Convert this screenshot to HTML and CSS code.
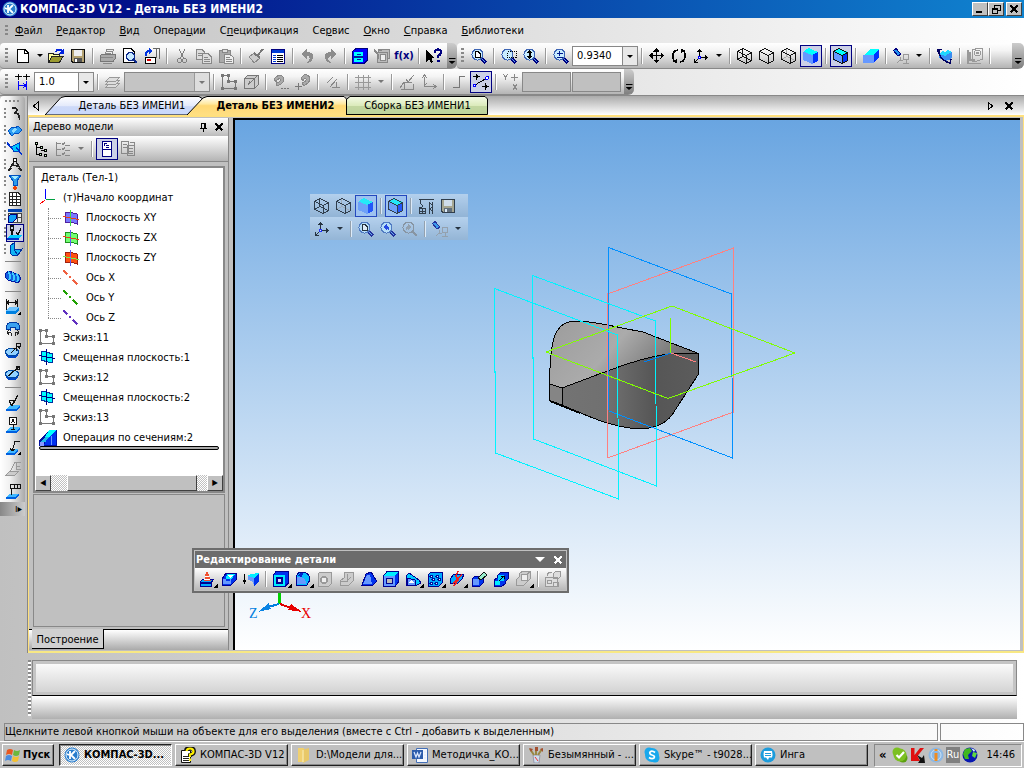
FILE: index.html
```html
<!DOCTYPE html>
<html lang="ru">
<head>
<meta charset="utf-8">
<title>КОМПАС-3D V12</title>
<link rel="stylesheet" href="styles.css">
</head>
<body>
<svg class="defs" aria-hidden="true">
<defs>
<linearGradient id="gUp" x1="0" y1="0" x2="1" y2="0.4"><stop offset="0" stop-color="#9c9c9c"/><stop offset=".5" stop-color="#ababab"/><stop offset="1" stop-color="#686868"/></linearGradient>
<linearGradient id="gLow" x1="0" y1="0" x2="1" y2="0"><stop offset="0" stop-color="#747474"/><stop offset=".4" stop-color="#707070"/><stop offset=".7" stop-color="#565656"/><stop offset="1" stop-color="#5c5c5c"/></linearGradient>
<linearGradient id="gTab1" x1="0" y1="0" x2="0" y2="1"><stop offset="0" stop-color="#fff"/><stop offset=".5" stop-color="#e4eafb"/><stop offset=".55" stop-color="#cdd9f8"/><stop offset="1" stop-color="#c8d8fc"/></linearGradient>
<linearGradient id="gTab2" x1="0" y1="0" x2="0" y2="1"><stop offset="0" stop-color="#fff"/><stop offset=".4" stop-color="#ffe9a0"/><stop offset=".5" stop-color="#ffd873"/><stop offset="1" stop-color="#ffdf83"/></linearGradient>
<linearGradient id="gTab3" x1="0" y1="0" x2="0" y2="1"><stop offset="0" stop-color="#f4fae6"/><stop offset=".5" stop-color="#dcebbc"/><stop offset=".55" stop-color="#c3d7a0"/><stop offset="1" stop-color="#bdd39c"/></linearGradient>
</defs>
<symbol id="new" viewBox="0 0 16 16"><path d="M2.500 1.500H10L13.500 5V14.500H2.500Z" fill="#fff" stroke="#000"/><path d="M9.500 1.500V5.500H13.500" fill="none" stroke="#000"/></symbol>
<symbol id="open" viewBox="0 0 16 16"><path d="M.5 14.500V5.500H5L6 6.500H11V9" fill="#ffffa0" stroke="#222"/><path d="M.5 14.500L4 8.500H15L11.500 14.500Z" fill="#9a9a30" stroke="#222"/><path d="M8 4C9 1 12 1 14 3" fill="none" stroke="#0022e0" stroke-width="2"/><path d="M15.500 1V6H11Z" fill="#0022e0"/></symbol>
<symbol id="save" viewBox="0 0 16 16"><path d="M1.500 1.500H14.500V14.500H3L1.500 13Z" fill="#b4a272" stroke="#111"/><path d="M4 2H12V8H4Z" fill="#eee"/><path d="M4 10H12V14H4Z" fill="#555"/><path d="M5 11H7V14H5Z" fill="#fff"/></symbol>
<symbol id="print" viewBox="0 0 16 16"><path d="M4.500 7L7 1.500H13.500L12 7" fill="#eee" stroke="#888"/><path d="M.5 7.500L3 6H15.500V10L13 13.500H.5Z" fill="#aaa" stroke="#777"/><path d="M1 9.500H13M3 15.500H12M7 3.500H12M6 5.500H11" stroke="#888"/></symbol>
<symbol id="preview" viewBox="0 0 16 16"><path d="M1.500 .5H9L12.500 4V14.500H1.500Z" fill="#fff" stroke="#000"/><path d="M11 11L15 15" stroke="#0d2a8c" stroke-width="2.500"/><circle cx="8.500" cy="8.500" r="4" fill="#c5e8ff" stroke="#0d2a8c" stroke-width="1.500"/></symbol>
<symbol id="pset" viewBox="0 0 16 16"><path d="M8.500 .5H15.500V11M12 1V10" fill="none" stroke="#666"/><path d="M1.500 9.500H11.500V15.500H1.500Z" fill="#fff" stroke="#000"/><path d="M3 11H7V12.500H3Z" fill="#e00000"/><path d="M2 8V5Q2 3 6 3" fill="none" stroke="#0033e0" stroke-width="2"/><path d="M5 0L9 3L5 6Z" fill="#0033e0"/></symbol>
<symbol id="cut" viewBox="0 0 16 16"><g fill="none" stroke="#808080" stroke-width="1.300"><path d="M5 1L9.500 10M11 1L6.500 10"/><circle cx="5.500" cy="12.500" r="2"/><circle cx="10.500" cy="12.500" r="2"/></g></symbol>
<symbol id="copy" viewBox="0 0 16 16"><g fill="#ddd" stroke="#888"><path d="M.5 1.500H6L8.500 4V11.500H.5Z"/><path d="M6.500 5.500H12L15.500 9V15.500H6.500Z"/><path d="M2 5.500H6M2 7.500H6M8 9.500H12M8 11.500H14M8 13.500H14"/></g></symbol>
<symbol id="paste" viewBox="0 0 16 16"><g fill="#aaa" stroke="#888"><path d="M1.500 2.500H12.500V14.500H1.500Z"/><path d="M4.500 1.500H9.500V4.500H4.500Z" fill="#ddd"/><path d="M6.500 6.500H12L15.500 9.500V15.500H6.500Z" fill="#eee"/><path d="M8 9.500H12M8 11.500H14M8 13.500H14"/></g></symbol>
<symbol id="brush" viewBox="0 0 16 16"><path d="M15 1L9 8" stroke="#777" stroke-width="2"/><path d="M1 9L6 5L12 10L6 15L4 12Z" fill="#ccc" stroke="#888"/><path d="M6 5L12 10" stroke="#777" stroke-width="2"/></symbol>
<symbol id="props" viewBox="0 0 16 16"><path d="M1.500 1.500H14.500V15H1.500Z" fill="#fff" stroke="#000080"/><path d="M2 2H14V5H2Z" fill="#003cd8"/><path d="M3 7.500H6M3 9.500H6M3 11.500H6M3 13.500H6" stroke="#003cd8"/><path d="M7 7.500H13M7 9.500H13M7 11.500H13M7 13.500H13" stroke="#000"/></symbol>
<symbol id="undo" viewBox="0 0 16 16"><path d="M1 6L7 1V4Q14 4 13 10Q12 14 7 15Q11 11 9 9Q8.500 8 7 8V11Z" fill="#8c8c8c"/></symbol>
<symbol id="lib" viewBox="0 0 16 16"><path d="M.5 3.500L4 .5H15.500V12L12 15.500H.5Z" fill="#00f" stroke="#000080"/><path d="M2 4H11V14H2Z" fill="#0ff"/><path d="M2 9H11" stroke="#0020a0" stroke-width="2"/><path d="M4.500 6.500H8.500M4.500 11.500H8.500" stroke="#0020a0"/></symbol>
<symbol id="vars" viewBox="0 0 16 16"><g fill="#bbb" stroke="#888"><path d="M4.500 1.500H15.500V10H4.500Z"/><path d="M3.500 4.500H13.500V14.500H3.500Z"/></g><path d="M6 6H11V12H6Z" fill="#eee" stroke="#888"/><path d="M0 2L4 6M4 2H8M4 6V11" stroke="#888" stroke-width="2"/></symbol>
<symbol id="help" viewBox="0 0 16 16"><path d="M0 2V14L3 11L5 15L7 14L5.500 10H9Z" fill="#000"/><path d="M9 5Q9 1.500 12 1.500Q15 1.500 15 4.500Q15 6.500 12 8V10" fill="none" stroke="#000080" stroke-width="2.200"/><path d="M11 12H13.500V14H11Z" fill="#000080"/></symbol>
<symbol id="lens" viewBox="0 0 16 16"><path d="M10 10L15 15" stroke="#000080" stroke-width="3"/><path d="M10.500 10.500L14.500 14.500" stroke="#5aa8f8"/><circle cx="6.500" cy="6.500" r="5.500" fill="#c8ecff" stroke="#3c64b4"/></symbol>
<symbol id="zpage" viewBox="0 0 16 16"><use href="#lens"/><path d="M4.500 3.500H7L9 5.500V9.500H4.500Z" fill="#fff" stroke="#000"/></symbol>
<symbol id="zarea" viewBox="0 0 16 16"><use href="#lens"/><path d="M6.500 3.500H15.500V9.500H6.500Z" fill="none" stroke="#000" stroke-dasharray="1 1"/></symbol>
<symbol id="zud" viewBox="0 0 16 16"><use href="#lens"/><path d="M6.500 1.500L9.500 5H7.500V8H9.500L6.500 11.500L3.500 8H5.500V5H3.500Z" fill="#000"/></symbol>
<symbol id="zpm" viewBox="0 0 16 16"><use href="#lens"/><path d="M3.500 5.500H9.500M6.500 2.500V8M3.500 9.500H9.500" stroke="#00188c"/></symbol>
<symbol id="zback" viewBox="0 0 16 16"><use href="#lens"/><path d="M3 6L7 3V5Q10 5 9 10Q8.500 7.500 7 7.500V9Z" fill="#0020e0"/></symbol>
<symbol id="zfwd" viewBox="0 0 16 16"><circle cx="6.500" cy="6.500" r="5.500" fill="none" stroke="#888"/><path d="M10.500 10.500L15 15" stroke="#888" stroke-width="2"/><path d="M10 6L6 3V5Q3 5 4 10Q4.500 7.500 6 7.500V9Z" fill="#999"/></symbol>
<symbol id="move" viewBox="0 0 16 16"><path d="M7.500 2V14M2 7.500H14" stroke="#000"/><path d="M7.500 0L10.500 3.500H4.500ZM7.500 15L10.500 11.500H4.500ZM0 7.500L3.500 4.500V10.500ZM15 7.500L11.500 4.500V10.500Z" fill="#000"/></symbol>
<symbol id="rot" viewBox="0 0 16 16"><path d="M4 14Q0 9 3 4Q4 2 7 2M12 2Q16 7 13 12Q12 14 9 14" fill="none" stroke="#000" stroke-width="1.500"/><path d="M1 13L6 15.500V11ZM15 3L10 .5V5Z" fill="#000"/></symbol>
<symbol id="axes" viewBox="0 0 16 16"><path d="M6.500 9V2M7 9.500H14M6 10L2 14M4.500 4L6.500 1.500L8.500 4M12 7.500L14.500 9.500L12 11.500M1.500 11V14.500H5" fill="none" stroke="#000"/><path d="M5.500 8.500H7.500V10.500H5.500Z" fill="#fff" stroke="#00f"/></symbol>
<symbol id="wire" viewBox="0 0 16 16"><path d="M.5 3.500L5.500 .5L14.500 4.500V12.500L9.500 15.500L.5 11.500ZM.5 3.500L9.500 7.500L14.500 4.500M9.500 7.500V15M5.500 1V8.500L.5 11.500M5.500 8.500L14.500 12.500" fill="none" stroke="#111"/></symbol>
<symbol id="hid" viewBox="0 0 16 16"><path d="M.5 3.500L5.500 .5L14.500 4.500V12.500L9.500 15.500L.5 11.500ZM.5 3.500L9.500 7.500L14.500 4.500M9.500 7.500V15" fill="none" stroke="#111"/></symbol>
<symbol id="thin" viewBox="0 0 16 16"><path d="M5.500 1V8.500L.5 11.500M5.500 8.500L14.500 12.500" fill="none" stroke="#aaa"/><use href="#hid"/></symbol>
<symbol id="shade" viewBox="0 0 16 16"><path d="M0 4L5.500 0L15 4L9.500 8Z" fill="#0ff"/><path d="M0 3.500L9.500 7V16L0 12Z" fill="#69f"/><path d="M9.500 7L15 4V13L9.500 16Z" fill="#03f"/></symbol>
<symbol id="shedge" viewBox="0 0 16 16"><use href="#shade"/><use href="#hid"/></symbol>
<symbol id="persp" viewBox="0 0 16 16"><path d="M0 8L8 1H16L11 6V8Z" fill="#0ff"/><path d="M0 7H11V15H0Z" fill="#69f"/><path d="M11 7L16 1V9L11 15Z" fill="#03f"/></symbol>
<symbol id="lamp" viewBox="0 0 16 16"><path d="M.5 2.500L3 .5L8 6L5 8Z" fill="#2090f0" stroke="#000080"/><path d="M10.500 6.500H15.500V11.500H10.500ZM13 12V15M10 15.500H16M7 9V12L4 15M7 12H10" fill="none" stroke="#999"/></symbol>
<symbol id="orient" viewBox="0 0 16 16"><path d="M2 6L6 3L8 4L11 2L15 4V9L12 12L8 13L2 10Z" fill="#3a8cf0"/><path d="M2 6L6 3L8 4L11 2L15 4L11 6L8 8Z" fill="#20d8ff"/><path d="M2 2Q1 7 6 12L13 15M1 4V1.500H5M14 11L13 15L9 14" fill="none" stroke="#000060" stroke-width="1.300"/></symbol>
<symbol id="spec" viewBox="0 0 16 16"><g fill="none" stroke="#999"><path d="M5.500 2L10 .5H15.500V11L10 13H5.500Z"/><circle cx="10.500" cy="5" r="3"/><circle cx="10.500" cy="5" r="1"/><path d="M.5 2V15.500H14M3 4V12H8" stroke-width="2"/></g></symbol>
<symbol id="dims" viewBox="0 0 16 16"><path d="M0 2.500H7M3.500 0V6M8 2.500H15M11.500 0V6" stroke="#111"/><path d="M2 2.500L3.500 1L5 2.500L3.500 4ZM10 2.500L11.500 1L13 2.500L11.500 4Z"/><path d="M3.500 7V16M11.500 7V16M4 11.500H11M8 9L11 11.500L8 14" fill="none" stroke="#00f"/></symbol>
<symbol id="layers" viewBox="0 0 16 16"><g fill="#ddd" stroke="#999"><path d="M1 13L5 9H15L11 13Z"/><path d="M1 10L5 6H15L11 10Z"/><path d="M1 7L5 3H15L11 7Z"/></g></symbol>
<symbol id="sk" viewBox="0 0 16 16"><path d="M1.500 1.500H7.500V7.500H14.500V14.500H1.500Z" fill="none" stroke="#777"/><path d="M0 0H3V3H0ZM6 0H9V3H6ZM6 6H9V9H6ZM13 6H16V9H13ZM13 13H16V16H13ZM0 13H3V16H0Z" fill="#777"/></symbol>
<symbol id="sk3" viewBox="0 0 16 16"><path d="M1.500 4.500L5 1H15V11L11.500 14.500H1.500ZM1.500 4.500H11.500V14.500M11.500 4.500L15 1M5 11L14 2M5 11L7 7" fill="#ccc" stroke="#777"/></symbol>
<symbol id="mag" viewBox="0 0 16 16"><path d="M1 5L5 1.500Q8 0 10 3Q12 7 8 10L4 12L3 9Q8 8 7 5Q5 4 3 8Z" fill="#aaa" stroke="#888"/><path d="M8 14.500H10M11 14.500H13M14 14.500H16" stroke="#777"/></symbol>
<symbol id="mag2" viewBox="0 0 16 16"><path d="M6 4L9 1Q14 0 15 5Q15 8 9 12L7 9Q12 7 11 5Q9 4 8 7Z" fill="#aaa" stroke="#888"/><path d="M0 12.500H7M3.500 9V16" stroke="#777"/></symbol>
<symbol id="par" viewBox="0 0 16 16"><path d="M2 9L8 3M5 13L12 5M7 13.500H15M11.500 8V13" stroke="#888"/></symbol>
<symbol id="grid" viewBox="0 0 16 16"><path d="M0 3.500H16M0 8.500H16M0 13.500H16M3.500 1V16M8.500 1V16M13.500 1V16" stroke="#999"/></symbol>
<symbol id="lcs" viewBox="0 0 16 16"><path d="M1 14L5 8H13M5 8V15M2 15.500H14V10M7 5L9 8L15 1" fill="none" stroke="#888"/></symbol>
<symbol id="ax2" viewBox="0 0 16 16"><path d="M3.500 3V12.500H14M1 4L3.500 1L6 4M12 10L15 12.500L12 15M3 12L6 9" fill="none" stroke="#888"/></symbol>
<symbol id="step" viewBox="0 0 16 16"><path d="M2 13.500H8.500V2.500H14" fill="none" stroke="#777"/></symbol>
<symbol id="pts" viewBox="0 0 16 16"><path d="M2 11L13 4.500M0 2.500H7M3.500 -1V6M9 12.500H16M12.500 9V16" stroke="#000"/><path d="M3.500 .5L5.500 2.500L3.500 4.500L1.500 2.500ZM12.500 10.500L14.500 12.500L12.500 14.500L10.500 12.500Z" fill="#000"/><circle cx="1.500" cy="11.500" r="1.500" fill="#fff" stroke="#00f"/><circle cx="14" cy="4" r="1.500" fill="#fff" stroke="#00f"/></symbol>
<symbol id="xy" viewBox="0 0 16 16"><path d="M0 0L2.500 3L5 0M2.500 3V6M10 10L14 16M14 10L10 16M8 3.500H15M11.500 0V7" fill="none" stroke="#888"/></symbol>
<symbol id="curve" viewBox="0 0 16 16"><path d="M5 2Q10 1 10 4Q10 6 7 7Q12 7 12 10Q12 13 13 14" fill="none" stroke="#222" stroke-width="1.500"/></symbol>
<symbol id="surf" viewBox="0 0 16 16"><path d="M1 8L5 4L8 5L11 3L15 7L11 11L8 10L5 13Z" fill="#2a9cf4" stroke="#0050c0"/><path d="M4 8L8 5L10 6L7 10Z" fill="#8cdcff"/></symbol>
<symbol id="surf2" viewBox="0 0 16 16"><path d="M4 7L12 3V11L7 12Z" fill="#00c8ff" stroke="#0040c0"/><path d="M0 2L6 10M9 7L15 15M0 4L5 9" stroke="#0030d0" stroke-width="1.300"/></symbol>
<symbol id="comp" viewBox="0 0 16 16"><path d="M8 3L2 13M8 3L14 13M5 8L11 9M1 14L4 11M15 14L12 11" fill="none" stroke="#222" stroke-width="1.500"/><circle cx="8" cy="3" r="2" fill="#fff" stroke="#111"/></symbol>
<symbol id="filt" viewBox="0 0 16 16"><path d="M2 1H14L10 7V11H6V7Z" fill="#2c9cec" stroke="#0050c0"/><path d="M4 2H12L8 5Z" fill="#a8ecff"/><path d="M8 11.500L10.500 14L8 16L5.500 14Z" fill="#f04000"/></symbol>
<symbol id="sheet" viewBox="0 0 16 16"><path d="M2.500 1.500H11L13.500 4V14.500H2.500ZM2 5.500H13M2 8.500H13M2 11.500H13M5.500 2V14M9.500 2V14" fill="#fff" stroke="#222"/></symbol>
<symbol id="tbl" viewBox="0 0 16 16"><path d="M1 1H15V4H1Z" fill="#0040b0"/><path d="M1.500 5.500H14.500V14.500H1.500ZM6 5V14M10 5V14M2 9.500H14" fill="#eee" stroke="#444"/><path d="M1 9L4 6H9V11L6 14H1Z" fill="#10a0f8" stroke="#000080"/></symbol>
<symbol id="leader" viewBox="0 0 16 16"><path d="M3.500 1V5H6.500V1ZM5 5V10M9 7L11 10L14 3" fill="none" stroke="#111" stroke-width="1.200"/><path d="M0 13L3 10H15L12 14H0Z" fill="#0cf"/><path d="M0 13H12V15H0Z" fill="#03c"/></symbol>
<symbol id="elbow" viewBox="0 0 16 16"><path d="M3 4L7 1V8L15 7L11 13L6 14L3 11Z" fill="#10b4f4" stroke="#0030a0"/><path d="M7 8L11 13" stroke="#0030a0"/></symbol>
<symbol id="coil" viewBox="0 0 16 16"><path d="M1 4L4 2L14 6L16 10L13 14L3 11L0 8Z" fill="#1060e0" stroke="#0018a0"/><path d="M3 3Q7 6 4 11M7 4Q11 7 8 12M11 5Q15 8 12 13" fill="none" stroke="#3cccff" stroke-width="1.600"/></symbol>
<symbol id="dimp" viewBox="0 0 16 16"><path d="M1.500 0V11M12.500 0V9M2 3.500H12M4 1.500L2 3.500L4 5.500M10 1.500L12 3.500L10 5.500" fill="none" stroke="#111"/><path d="M1 12L4 8H14L11 12Z" fill="#70c4ff"/><path d="M1 12H11L14 8V11L11 15H1Z" fill="#0080e0"/><path d="M12 16H16V12Z"/></symbol>
<symbol id="arc" viewBox="0 0 16 16"><path d="M1 8Q1 1 8 1Q15 1 15 8L11 9Q11 6 8 6Q5 6 5 9Z" fill="#3aa0f0" stroke="#0038a0"/><path d="M2 11.500H6M10 11.500H14M4 9L2 11L4 14M12 9L14 11L12 14M6 12V15M10 12V15" fill="none" stroke="#222"/></symbol>
<symbol id="rad" viewBox="0 0 16 16"><ellipse cx="7" cy="11" rx="6.500" ry="4.500" fill="#0048c8"/><ellipse cx="7" cy="9" rx="6.500" ry="4" fill="#90d0ff" stroke="#0048a0"/><path d="M6 10L11 5M8 5.500H11V8M11.500 5V.5H15V3H12L15 5.500" fill="none" stroke="#111"/></symbol>
<symbol id="dia" viewBox="0 0 16 16"><ellipse cx="7" cy="11" rx="6.500" ry="4.500" fill="#0048c8"/><ellipse cx="7" cy="9" rx="6.500" ry="4" fill="#90d0ff" stroke="#0048a0"/><path d="M3 11L15 1" stroke="#111" stroke-width="1.300"/><circle cx="13" cy="3" r="2" fill="none" stroke="#111"/></symbol>
<symbol id="rough" viewBox="0 0 16 16"><path d="M1 14L5 10H15L11 14Z" fill="#40b8ff"/><path d="M1 14H11L15 10V12L11 16H1Z" fill="#0060e0"/><path d="M4 5.500H9L7 11L4 5.500M7 11L13 0" fill="none" stroke="#111" stroke-width="1.200"/></symbol>
<symbol id="base" viewBox="0 0 16 16"><path d="M1 14L5 10H15L11 14Z" fill="#40b8ff"/><path d="M1 14H11L15 10V12L11 16H1Z" fill="#0060e0"/><path d="M4.500 .5H11.500V7.500H4.500ZM8 8V12M6 12.500H10" fill="#fff" stroke="#111"/><path d="M6.500 6L8 2L9.500 6" fill="none" stroke="#111"/></symbol>
<symbol id="ldr" viewBox="0 0 16 16"><path d="M1 14L5 10H13L10 14Z" fill="#40b8ff"/><path d="M1 14H10L13 10V12L10 16H1Z" fill="#0060e0"/><path d="M7 12L10 2.500H15M5 9L7 12L10 10" fill="none" stroke="#111"/><path d="M12 16H16V12Z"/></symbol>
<symbol id="ldrg" viewBox="0 0 16 16"><path d="M1 14L5 10H14L10 14Z" fill="#ccc" stroke="#999"/><path d="M5 11L10 1.500H16M11.500 2V8.500H16M11.500 5.500H15" fill="none" stroke="#999"/></symbol>
<symbol id="tol" viewBox="0 0 16 16"><path d="M1 14L5 11H14L10 14Z" fill="#40b8ff"/><path d="M1 14H10L14 11V13L10 16H1Z" fill="#0060e0"/><path d="M5.500 1.500H15.500V5.500H5.500ZM9 1V5M12 1V5M6 5V12" fill="none" stroke="#111"/></symbol>
<symbol id="tree" viewBox="0 0 16 16"><path d="M3.500 3V13.500M4 6.500H8M4 13.500H8M8 9.500H12" fill="none" stroke="#000"/><path d="M2.500 1.500H4.500V3.500H2.500ZM7.500 5.500H9.500V7.500H7.500ZM11.500 8.500H13.500V10.500H11.500ZM11.500 13H13.500V15H11.500ZM6.500 12.500H8.500V14.500H6.500Z" fill="#cfc" stroke="#000"/></symbol>
<symbol id="chk" viewBox="0 0 16 16"><path d="M1.500 1V15M2 2.500H6M2 8.500H6M2 14.500H6M10 4.500H15M10 9.500H15M10 14.500H15M7 2L8 4L10 1M7 7L8 9L10 6M7 12L8 14L10 11" fill="none" stroke="#888"/></symbol>
<symbol id="doc" viewBox="0 0 16 16"><path d="M3.500 .5H12.500V15.500H3.500Z" fill="#fff" stroke="#000080"/><path d="M3 8.500H13M5.500 2V5M6 2.500H8M7 4.500H10M7 6.500H10" stroke="#000080"/></symbol>
<symbol id="docs" viewBox="0 0 16 16"><path d="M.5 .5H7.500V12.500H.5ZM6.500 4.500H13.500V14.500H6.500ZM2 3.500H6M2 6.500H6M8 7.500H12M8 10.500H12M8 12.500H12M9 1.500H13.500V4" fill="none" stroke="#888"/></symbol>
<symbol id="org" viewBox="0 0 16 16"><path d="M6.500 10V0" stroke="#00f"/><path d="M7 10.500H16" stroke="#00a040"/><path d="M6 11L1 15" stroke="#f00"/></symbol>
<symbol id="pxy" viewBox="0 0 16 16"><path d="M2 3L6 2L14 4V14L8 12L2 13Z" fill="#7878ff" stroke="#5020a0"/><path d="M7.500 0V16" stroke="#40e040"/><path d="M0 6.500L16 9.500" stroke="#f04010"/></symbol>
<symbol id="pzx" viewBox="0 0 16 16"><path d="M2 3L6 2L14 4V14L8 12L2 13Z" fill="#70ff70" stroke="#209020"/><path d="M7.500 0V16" stroke="#5c5cf8"/><path d="M0 6.500L16 9.500" stroke="#f04010"/></symbol>
<symbol id="pzy" viewBox="0 0 16 16"><path d="M2 3L6 2L14 4V14L8 12L2 13Z" fill="#ff5010" stroke="#a02010"/><path d="M7.500 0V16" stroke="#5c5cf8"/><path d="M0 6.500L16 9.500" stroke="#70f050"/></symbol>
<symbol id="ofp" viewBox="0 0 16 16"><path d="M2 2.500H6L13.500 5V13H9L2 11Z" fill="#0ff" stroke="#0030a0"/><path d="M7.500 0V16M0 6.500L16 9.500" stroke="#000080"/></symbol>
<symbol id="axln" viewBox="0 0 16 16"><path d="M0 0L16 16" stroke="currentColor" stroke-width="1.500" stroke-dasharray="6 3 2 3"/></symbol>
<symbol id="loft" viewBox="0 0 18 18"><path d="M0 12L10 1H18V17H0Z" fill="#0010a0"/><path d="M10 1H17L13 8H6Z" fill="#0ff"/><path d="M1 13L6 8H12V16H8L5 13Z" fill="#20b8e8"/><path d="M1 13H5V17H1Z" fill="#89f"/><path d="M8 10L17 2V16H5Z" fill="#0030f0"/><path d="M12.500 7V16" stroke="#69f"/></symbol>
<symbol id="e1" viewBox="0 0 16 16"><path d="M1 11L4 8H15L12 12V15H1Z" fill="#0af" stroke="#000090"/><path d="M5 10L7 1H9L12 10Z" fill="#f05030"/><path d="M6 5H10M5 8H11" stroke="#fff"/><path d="M1 12H12" stroke="#000090" stroke-width="1.500"/></symbol>
<symbol id="e2" viewBox="0 0 16 16"><path d="M1 8L5 2H15V9L10 14H1Z" fill="#03e" stroke="#000090"/><path d="M6 3H14L11 8H5Z" fill="#0ef"/><path d="M7 4H12L9 7Z" fill="#fff"/><path d="M2 8H5V10H9V8H10V13H2Z" fill="#69f"/></symbol>
<symbol id="e3" viewBox="0 0 16 16"><path d="M1.500 3V11M0 9L1.500 12L3 9" fill="none" stroke="#000"/><path d="M4 5L8 3L16 2L11 7Z" fill="#0ef"/><path d="M5 5L11 7V15Q10 9 5 9Z" fill="#69f"/><path d="M11 7L16 2V11L11 15Z" fill="#03e"/></symbol>
<symbol id="e4" viewBox="0 0 16 16"><path d="M.5 3.500L3 .5H15.500V12L12 15.500H.5Z" fill="#03e" stroke="#000090"/><path d="M1 4H12V15H1Z" fill="#0ef"/><path d="M4 7H9V12H4Z" fill="#d8dcff" stroke="#000090" stroke-width="2"/></symbol>
<symbol id="e5" viewBox="0 0 16 16"><path d="M1 6L4 1H9Q15 3 15 9L12 14H1Z" fill="#0bf" stroke="#000090"/><path d="M2 6H6Q11 7 11 13H2Z" fill="#69f"/><path d="M3 5L5 2H8L7 6Z" fill="#02c"/></symbol>
<symbol id="e6" viewBox="0 0 16 16"><path d="M1 3L3 1H14V13L12 15H1Z" fill="#ccc" stroke="#999"/><circle cx="7" cy="9" r="3" fill="#eee" stroke="#999" stroke-width="1.500"/></symbol>
<symbol id="e7" viewBox="0 0 16 16"><path d="M1 10L5 7V2L8 1H14V10L10 14H1Z" fill="#ccc" stroke="#999"/><path d="M8 3V10H1M8 10L12 6" fill="none" stroke="#999"/></symbol>
<symbol id="e8" viewBox="0 0 16 16"><path d="M1 14L5 3L10 1L15 9V11L12 14Z" fill="#03e" stroke="#000090"/><path d="M2 13L6 4H9L11 13Z" fill="#69f"/></symbol>
<symbol id="e9" viewBox="0 0 16 16"><path d="M.5 5L4 .5H15.500V11L12 15.500H.5Z" fill="#03e" stroke="#000090"/><path d="M1 5L4 1H15L12 5Z" fill="#0ef"/><path d="M1 5H12V15H1Z" fill="#69f"/><path d="M3.500 7.500H9.500V12.500H3.500Z" fill="#bbb" stroke="#000090"/></symbol>
<symbol id="e10" viewBox="0 0 16 16"><path d="M1 5L4 2L14 9L16 12L10 15L1 14Z" fill="#0cf" stroke="#000090"/><path d="M2 7L10 9V14H2Z" fill="#69f" stroke="#000090"/><path d="M4 12L6 9L9 12Z" fill="#fff"/></symbol>
<symbol id="e11" viewBox="0 0 16 16"><path d="M1 4L4 1H15V12L12 15H1Z" fill="#0af" stroke="#000090"/><g fill="#cfffff" stroke="#0010a0"><circle cx="4.500" cy="5.500" r="1.500"/><circle cx="10.500" cy="5.500" r="1.500"/><circle cx="6.500" cy="8.500" r="1.500"/><circle cx="12.500" cy="8.500" r="1.500"/><circle cx="4.500" cy="12.500" r="1.500"/><circle cx="9.500" cy="12.500" r="1.500"/></g></symbol>
<symbol id="e12" viewBox="0 0 16 16"><path d="M1 8L5 3H15L13 8L9 12H1Z" fill="#0af" stroke="#000090"/><path d="M9 0L7 5L9 9L5 15M13 4L4 12" fill="none" stroke="#e22" stroke-width="1.500"/></symbol>
<symbol id="e13" viewBox="0 0 16 16"><path d="M1 8L4 5H12V12L9 15H1Z" fill="#03e" stroke="#000090"/><path d="M2 8H8V14H2Z" fill="#69f"/><path d="M7 7L13 1L16 4L10 9Z" fill="#9ec" stroke="#111"/></symbol>
<symbol id="e14" viewBox="0 0 16 16"><path d="M5 4L8 1H15V8L12 11V13L9 15H1V9L4 7Z" fill="#03e" stroke="#000090"/><path d="M5 4H11V10H5Z" fill="#0cf"/><path d="M2 10H7V14H2Z" fill="#0ef"/><path d="M6 10L11 5M8 5.500H11V8" fill="none" stroke="#000"/></symbol>
<symbol id="e15" viewBox="0 0 16 16"><path d="M1 9L4 6V3L7 .5H15V8L12 11L9 14H1Z" fill="#ccc" stroke="#999"/><path d="M6 3H12V9H6ZM12 3L15 1" fill="#eee" stroke="#999"/></symbol>
<symbol id="e16" viewBox="0 0 16 16"><path d="M8.500 2.500L10.500 .5H15.500V5.500L13.500 7.500H8.500ZM.5 6.500H12.500V15.500H.5ZM2.500 9.500H6.500V12.500H2.500ZM8.500 11.500H13.500V15.500H8.500ZM2 5V3Q3 1.500 7 1.500" fill="#ddd" stroke="#999"/></symbol>
<symbol id="crane" viewBox="0 0 16 16"><path d="M1 1.500H16M2.500 2V6M11.500 4V16M14.500 4V16M12 5L15 8L12 11L15 14M3 6Q5 7 4 9H1M1.500 10.500H7.500V15.500H1.500ZM4.500 11V15M2 13.500H7" fill="none" stroke="#111"/></symbol>
<symbol id="klogo" viewBox="0 0 16 16"><circle cx="8" cy="8" r="7.500" fill="#287ccc"/><circle cx="8" cy="8" r="6" fill="none" stroke="#e6f5ff"/><path d="M6 4V12M11 4L7 8L11 12M3 7L5 8" fill="none" stroke="#fff" stroke-width="1.800"/></symbol>
<symbol id="win" viewBox="0 0 16 16"><path d="M2 3Q5 1 8 3L7 8Q4 6 1 8Z" fill="#e85820"/><path d="M9 3Q12 5 15 3L14 8Q11 10 8 8Z" fill="#6cb83c"/><path d="M1 9Q4 7 7 9L6 14Q3 12 0 14Z" fill="#4a8ce0"/><path d="M8 9Q11 11 14 9L13 14Q10 16 7 14Z" fill="#f4c030"/></symbol>
<symbol id="qdoc" viewBox="0 0 16 16"><path d="M1.500 3.500H10.500V15.500H1.500Z" fill="#fff" stroke="#111"/><path d="M3 9.500H8M3 11.500H9M3 13.500H9" stroke="#222"/><path d="M6 4Q6 1 10 1Q14 1 14 4.500Q14 7 10 8V10" fill="none" stroke="#111" stroke-width="4"/><path d="M6.500 4Q7 1.500 10 1.500Q13.500 1.500 13.500 4.500Q13.500 7 10 7.500V10M10 11.500V14" fill="none" stroke="#fff000" stroke-width="2.200"/></symbol>
<symbol id="fold" viewBox="0 0 16 16"><path d="M2 1H8V15H2Z" fill="#f0d070"/><path d="M6 3L13 1V13L7 16Z" fill="#e8c868"/><path d="M7 3V15" stroke="#fff4c0"/></symbol>
<symbol id="word" viewBox="0 0 16 16"><path d="M4.500 1.500H15.500V15.500H4.500Z" fill="#f4f8ff" stroke="#4470b8"/><path d="M0 3H11V12H0Z" fill="#2c5cac"/><path d="M2 5L4 10L5.500 6L7 10L9 5M12 5H14M12 8H14M12 11H14" fill="none" stroke="#dce8ff" stroke-width="1.200"/></symbol>
<symbol id="paint" viewBox="0 0 16 16"><path d="M5 8H12L11 16H6Z" fill="#cde" stroke="#99a"/><path d="M6 8L2 2M8 8V1M10 8L14 2" stroke="#984" stroke-width="2"/><path d="M1 1L5 2L3 5ZM7 0H10V4H7ZM12 2L15 1V5Z" fill="#a55030"/><path d="M7 10L10 14" stroke="#e33"/></symbol>
<symbol id="skype" viewBox="0 0 16 16"><circle cx="5" cy="5" r="4.500" fill="#18a8ec"/><circle cx="11" cy="11" r="4.500" fill="#18a8ec"/><circle cx="8" cy="8" r="7" fill="#18a8ec"/><path d="M11 5.500Q8 3 6 5Q5 7 8 8Q11.500 9 10 11Q8 12.500 5 10.500" fill="none" stroke="#fff" stroke-width="1.700"/></symbol>
<symbol id="msg" viewBox="0 0 16 16"><circle cx="8" cy="8" r="7.500" fill="#1c9cdc"/><path d="M4 4H12Q13 8 12 10.500H9L8 13L6 10.500H4Q3 7 4 4Z" fill="#fff"/><path d="M5 6.500H11M5 8.500H11" stroke="#1c9cdc"/></symbol>
<symbol id="ok" viewBox="0 0 16 16"><circle cx="5" cy="5" r="4.500" fill="#7cc020"/><circle cx="11" cy="11" r="4.500" fill="#5ca010"/><circle cx="8" cy="8" r="6.500" fill="#7cc020"/><path d="M4.500 8L7 10.500L12 5" fill="none" stroke="#fff" stroke-width="2.200"/></symbol>
<symbol id="kasp" viewBox="0 0 16 16"><path d="M1 1H4.500V8L10 1H14L7.500 9L10 14H1Z" fill="#e01010"/><path d="M7 8L12 11L14 8L15 16H8L10 13Z" fill="#111"/></symbol>
<symbol id="info" viewBox="0 0 16 16"><circle cx="8" cy="8" r="7.500" fill="#8cb8e4"/><circle cx="8" cy="8" r="5" fill="none" stroke="#cde4f8"/><path d="M8 2V4M8 6V14" stroke="#f08c20" stroke-width="3"/></symbol>
<symbol id="globe" viewBox="0 0 16 16"><circle cx="8" cy="8" r="7.500" fill="#0818b0"/><path d="M3 2L8 1L10 4L6 8L7 12L3 12L1 7Z" fill="#40b820"/><path d="M11 5L15 6L13 11L10 9Z" fill="#60d840"/><path d="M9 1L13 3L12 5" fill="#e8ffff"/></symbol>
<symbol id="x" viewBox="0 0 10 10"><path d="M1.500 1.500L8.500 8.500M8.500 1.500L1.500 8.500" stroke="currentColor" stroke-width="1.600"/></symbol>
<symbol id="tl" viewBox="0 0 10 10"><path d="M7 1V9L2.500 5Z" fill="none" stroke="#000"/></symbol>
<symbol id="tr" viewBox="0 0 10 10"><path d="M3 1V9L7.500 5Z" fill="none" stroke="#000"/></symbol>
<symbol id="pin" viewBox="0 0 10 10"><path d="M2 6.500H9M3.500 6V1.500H7.500V6M6.500 1V6M5.500 6V10" fill="none" stroke="#000"/></symbol>
</svg>

<header class="title"><svg class="soft"><use href="#klogo"/></svg><h1>КОМПАС-3D V12 - Деталь БЕЗ ИМЕНИ2</h1>
<button class="wb" aria-label="Свернуть"><svg viewBox="0 0 10 10"><path d="M1 8H7" stroke="#000" stroke-width="2"/></svg></button><button class="wb" aria-label="Восстановить"><svg viewBox="0 0 10 10"><path d="M3.500 4V1.500H9.500V6.500H7M3 1.500H10M1.500 4.500H6.500V9.500H1.500ZM1 5H7" fill="none" stroke="#000"/></svg></button><button class="wb last" aria-label="Закрыть"><svg><use href="#x"/></svg></button></header>

<nav class="menu"><i class="grip"></i><button><u>Ф</u>айл</button><button><u>Р</u>едактор</button><button><u>В</u>ид</button><button>Опера<u>ц</u>ии</button><button>С<u>п</u>ецификация</button><button>Се<u>р</u>вис</button><button><u>О</u>кно</button><button><u>С</u>правка</button><button><u>Б</u>иблиотеки</button></nav>

<div class="row">
<div class="bar" role="toolbar"><i class="grip"></i>
<button class="b" aria-label="Создать"><svg><use href="#new"/></svg></button><button class="dr" aria-label="Список"></button><button class="b" aria-label="Открыть"><svg><use href="#open"/></svg></button><button class="b" aria-label="Сохранить"><svg><use href="#save"/></svg></button><i class="s"></i>
<button class="b" aria-label="Печать"><svg><use href="#print"/></svg></button><button class="b" aria-label="Просмотр"><svg><use href="#preview"/></svg></button><button class="b" aria-label="Параметры"><svg><use href="#pset"/></svg></button><i class="s"></i>
<button class="b" aria-label="Вырезать"><svg><use href="#cut"/></svg></button><button class="b" aria-label="Копировать"><svg><use href="#copy"/></svg></button><button class="b" aria-label="Вставить"><svg><use href="#paste"/></svg></button><i class="s"></i>
<button class="b" aria-label="Кисть"><svg><use href="#brush"/></svg></button><button class="b" aria-label="Свойства"><svg><use href="#props"/></svg></button><i class="s"></i>
<button class="b" aria-label="Отменить"><svg><use href="#undo"/></svg></button><button class="b flip" aria-label="Повторить"><svg><use href="#undo"/></svg></button><i class="s"></i>
<button class="b" aria-label="Библиотеки"><svg><use href="#lib"/></svg></button><button class="b" aria-label="Переменные"><svg><use href="#vars"/></svg></button><button class="b fx">f(x)</button><i class="s"></i>
<button class="b" aria-label="Помощь"><svg><use href="#help"/></svg></button><button class="ov" aria-label="Ещё"></button></div>
<div class="bar grow" role="toolbar"><i class="grip"></i>
<button class="b" aria-label="Показать всё"><svg><use href="#zpage"/></svg></button><i class="s"></i><button class="b" aria-label="Рамкой"><svg><use href="#zarea"/></svg></button><button class="b" aria-label="Масштаб"><svg><use href="#zud"/></svg></button><i class="s"></i><button class="b" aria-label="Приблизить"><svg><use href="#zpm"/></svg></button>
<span class="combo w66"><select aria-label="Текущий масштаб"><option>0.9340</option></select></span><i class="s"></i>
<button class="b" aria-label="Сдвинуть"><svg><use href="#move"/></svg></button><button class="b" aria-label="Повернуть"><svg><use href="#rot"/></svg></button><button class="b" aria-label="Ориентация"><svg><use href="#axes"/></svg></button><button class="dr wide" aria-label="Список"></button><i class="s"></i>
<button class="b" aria-label="Каркас"><svg><use href="#wire"/></svg></button><button class="b" aria-label="Без невидимых линий"><svg><use href="#hid"/></svg></button><button class="b" aria-label="Тонкие линии"><svg><use href="#thin"/></svg></button><button class="b on" aria-label="Полутоновое"><svg><use href="#shade"/></svg></button><i class="s"></i><button class="b on" aria-label="С каркасом"><svg><use href="#shedge"/></svg></button><i class="s"></i><button class="b" aria-label="Перспектива"><svg><use href="#persp"/></svg></button><i class="s"></i><button class="b" aria-label="Упрощения"><svg><use href="#lamp"/></svg></button><button class="dr wide" aria-label="Список"></button><i class="s"></i><button class="b" aria-label="Перестроить"><svg><use href="#orient"/></svg></button><i class="s"></i><button class="b" aria-label="Спецификация"><svg><use href="#spec"/></svg></button><i class="s"></i><button class="ov end" aria-label="Ещё"></button></div>
</div>
<div class="row">
<div class="bar" role="toolbar"><i class="grip"></i>
<button class="b" aria-label="Шаг"><svg><use href="#dims"/></svg></button><span class="combo w60"><select aria-label="Текущий шаг"><option>1.0</option></select></span><i class="s"></i>
<button class="b" aria-label="Слои"><svg><use href="#layers"/></svg></button><span class="combo w84 off"><select aria-label="Слой" disabled><option></option></select></span><i class="s"></i>
<button class="b" aria-label="Эскиз"><svg><use href="#sk"/></svg></button><button class="b" aria-label="Эскиз из библиотеки"><svg><use href="#sk3"/></svg></button><i class="s"></i>
<button class="b" aria-label="Привязки"><svg><use href="#mag"/></svg></button><button class="b" aria-label="Запретить привязки"><svg><use href="#mag2"/></svg></button><i class="s"></i>
<button class="b" aria-label="Ограничения"><svg><use href="#par"/></svg></button><i class="s"></i>
<button class="b" aria-label="Сетка"><svg><use href="#grid"/></svg></button><button class="dr wide off" aria-label="Список"></button><i class="s"></i>
<button class="b" aria-label="ЛСК"><svg><use href="#lcs"/></svg></button><button class="b" aria-label="Оси"><svg><use href="#ax2"/></svg></button><i class="s"></i>
<button class="b" aria-label="Ортогонально"><svg><use href="#step"/></svg></button><button class="b on" aria-label="Скругление"><svg><use href="#pts"/></svg></button><i class="s"></i>
<button class="b" aria-label="Координаты"><svg><use href="#xy"/></svg></button><input class="co" aria-label="X" disabled><input class="co" aria-label="Y" disabled><button class="ov" aria-label="Ещё"></button></div>
</div>

<main class="work">
<div class="side" role="toolbar"><i class="hgrip"></i>
<button aria-label="Кривые"><svg><use href="#curve"/></svg></button><button aria-label="Поверхности"><svg><use href="#surf"/></svg></button><button aria-label="Массивы"><svg><use href="#surf2"/></svg></button><button aria-label="Измерения"><svg><use href="#comp"/></svg></button><button aria-label="Фильтры"><svg><use href="#filt"/></svg></button><button aria-label="Спецификация"><svg><use href="#sheet"/></svg></button><button aria-label="Отчёты"><svg><use href="#tbl"/></svg></button><button class="act" aria-label="Оформление"><svg><use href="#leader"/></svg></button><button aria-label="Листовое тело"><svg><use href="#elbow"/></svg></button><hr>
<button class="big" aria-label="Резьба"><svg><use href="#coil"/></svg></button><hr>
<button class="big" aria-label="Линейный размер"><svg><use href="#dimp"/></svg></button><button class="big" aria-label="Угловой размер"><svg><use href="#arc"/></svg></button><button class="big" aria-label="Радиальный размер"><svg><use href="#rad"/></svg></button><button class="big" aria-label="Диаметральный размер"><svg><use href="#dia"/></svg></button><hr>
<button class="big" aria-label="Шероховатость"><svg><use href="#rough"/></svg></button><button class="big" aria-label="База"><svg><use href="#base"/></svg></button><button class="big" aria-label="Выноска"><svg><use href="#ldr"/></svg></button><button class="big" aria-label="Клеймение"><svg><use href="#ldrg"/></svg></button><button class="big" aria-label="Допуск"><svg><use href="#tol"/></svg></button><button class="more" aria-label="Ещё">ı▸</button></div>

<section class="docs">
<div class="tabs"><button class="nav" aria-label="Назад"><svg><use href="#tl"/></svg></button>
<button class="tab t1"><svg viewBox="0 0 158 19" preserveAspectRatio="none"><path d="M0 19L16 1.500L20 .5H154L158 3V19Z" fill="url(#gTab1)" stroke="#000"/></svg><span>Деталь БЕЗ ИМЕНИ1</span></button><button class="tab t2"><svg viewBox="0 0 160 19" preserveAspectRatio="none"><path d="M0 19L16 2L20 .5H157L159.500 3V19" fill="url(#gTab2)" stroke="#000"/></svg><span>Деталь БЕЗ ИМЕНИ2</span></button><button class="tab t3"><svg viewBox="0 0 142 19" preserveAspectRatio="none"><path d="M0 3L3 .5H139L141.500 3V18.500H0" fill="url(#gTab3)" stroke="#000"/></svg><span>Сборка БЕЗ ИМЕНИ1</span></button>
<button class="nav right" aria-label="Вперёд"><svg><use href="#tr"/></svg></button><button class="nav" aria-label="Закрыть"><svg><use href="#x"/></svg></button></div>
<div class="frame">
<aside class="panel">
<div class="ph"><h2>Дерево модели</h2><button aria-label="Закрепить"><svg><use href="#pin"/></svg></button><button aria-label="Закрыть"><svg><use href="#x"/></svg></button></div>
<div class="pt"><button class="b" aria-label="Структура"><svg><use href="#tree"/></svg></button><button class="b" aria-label="Состав"><svg><use href="#chk"/></svg></button><button class="dr wide off" aria-label="Список"></button><i class="s"></i><button class="b on" aria-label="Отношения"><svg><use href="#doc"/></svg></button><button class="b" aria-label="Доп. окно"><svg><use href="#docs"/></svg></button></div>
<div class="pb">
<div class="box treebox">
<ul class="tree"><li class="root">Деталь (Тел-1)</li>
<li><svg><use href="#org"/></svg>(т)Начало координат
<ul><li><svg><use href="#pxy"/></svg>Плоскость XY</li><li><svg><use href="#pzx"/></svg>Плоскость ZX</li><li><svg><use href="#pzy"/></svg>Плоскость ZY</li><li><svg class="red"><use href="#axln"/></svg>Ось X</li><li><svg class="green"><use href="#axln"/></svg>Ось Y</li><li><svg class="violet"><use href="#axln"/></svg>Ось Z</li></ul></li>
<li><svg><use href="#sk"/></svg>Эскиз:11</li><li><svg><use href="#ofp"/></svg>Смещенная плоскость:1</li><li><svg><use href="#sk"/></svg>Эскиз:12</li><li><svg><use href="#ofp"/></svg>Смещенная плоскость:2</li><li><svg><use href="#sk"/></svg>Эскиз:13</li><li><svg class="loft"><use href="#loft"/></svg>Операция по сечениям:2</li></ul>
<div class="stop"></div>
<div class="scroll"><button aria-label="Влево">◀</button><i class="thumb"></i><button aria-label="Вправо">▶</button></div>
</div>
<div class="box lower"></div>
</div>
<div class="pf"><button>Построение</button></div>
</aside>
<div class="view">
<svg class="model"><g transform="translate(-235,-120)" fill="none" stroke-width="1">
<path d="M549.500 385C550 345 553 323 572 321.500C590 320 610 326 643 332L698.500 353.500H672C640 358 608 371 562 388Z" fill="url(#gUp)" stroke="#000"/>
<path d="M562 388C608 371 640 357 672 353.500H698.500V374L672 415Q662 428 640 429C610 427 590 417 562 405L549.500 400.500V384Z" fill="url(#gLow)" stroke="#000"/>
<path d="M549.500 384L562 388V405L549.500 400.500Z" fill="#858585" stroke="#000"/><path d="M550 401L580 413" stroke="#000" stroke-width="2"/>
<path d="M607.500 458V294L733.500 248V412L607.500 458" stroke="#ff8080"/>
<path d="M608.500 410V247.500L731.500 294L732.500 458L609 411" stroke="#0090ff"/>
<path d="M494.500 288.500L617.500 335L618.500 499L495.500 453ZM532.500 275.500L655.500 321L656.500 486L533.500 439Z" stroke="#00f4ff"/>
<path d="M546 352L672 306L795 353L668 398.500Z" stroke="#80ff00"/><path d="M670.500 318V353" stroke="#80ff00"/>
<path d="M671 353L644 362" stroke="#0080f0"/><path d="M671 353L696 362" stroke="#ff8080"/>
<path d="M279.500 604V590" stroke="#00d000" stroke-width="3"/><path d="M279 604L268 607" stroke="#0080e0" stroke-width="2"/><path d="M258 612L269 603L271 609Z" fill="#0a84e4"/><path d="M280 604L291 608" stroke="#e00000" stroke-width="2"/><path d="M302 612L291 604L288 610Z" fill="#e80000"/>
<text x="249" y="618" fill="#0080e0">Z</text><text x="301" y="618" fill="#e80000">X</text></g></svg>
<div class="vtool"><div><button class="b" aria-label="Каркас"><svg><use href="#wire"/></svg></button><button class="b" aria-label="Тонкие линии"><svg><use href="#thin"/></svg></button><button class="b on" aria-label="Полутоновое"><svg><use href="#shade"/></svg></button><i class="s"></i><button class="b on" aria-label="С каркасом"><svg><use href="#shedge"/></svg></button><i class="s"></i><button class="b" aria-label="Библиотека"><svg><use href="#crane"/></svg></button><button class="b" aria-label="Сохранить"><svg><use href="#save"/></svg></button></div>
<div><button class="b" aria-label="Ориентация"><svg><use href="#axes"/></svg></button><button class="dr wide" aria-label="Список"></button><i class="s"></i><button class="b" aria-label="Показать всё"><svg><use href="#zpage"/></svg></button><button class="b" aria-label="Предыдущий масштаб"><svg><use href="#zback"/></svg></button><button class="b" aria-label="Следующий масштаб"><svg><use href="#zfwd"/></svg></button><i class="s"></i><button class="b" aria-label="Упрощения"><svg><use href="#lamp"/></svg></button><button class="dr wide" aria-label="Список"></button></div></div>
</div>
</div>
</section>
<div class="float" role="toolbar"><div class="fh"><h2>Редактирование детали</h2><button class="tri" aria-label="Меню"></button><button aria-label="Закрыть"><svg><use href="#x"/></svg></button></div>
<div class="fb"><button class="b m" aria-label="Выдавливание"><svg><use href="#e1"/></svg></button><button class="b" aria-label="Вырезать"><svg><use href="#e2"/></svg></button><button class="b" aria-label="Толщина"><svg><use href="#e3"/></svg></button><i class="s"></i><button class="b m" aria-label="Оболочка"><svg><use href="#e4"/></svg></button><button class="b m" aria-label="Скругление"><svg><use href="#e5"/></svg></button><button class="b" aria-label="Отверстие"><svg><use href="#e6"/></svg></button><button class="b" aria-label="Ребро"><svg><use href="#e7"/></svg></button><button class="b" aria-label="Уклон"><svg><use href="#e8"/></svg></button><button class="b" aria-label="Тонкостенная оболочка"><svg><use href="#e9"/></svg></button><button class="b m" aria-label="Сечение"><svg><use href="#e10"/></svg></button><button class="b m" aria-label="Массив"><svg><use href="#e11"/></svg></button><button class="b m" aria-label="Разрез"><svg><use href="#e12"/></svg></button><button class="b" aria-label="Резьба"><svg><use href="#e13"/></svg></button><button class="b" aria-label="Масштаб"><svg><use href="#e14"/></svg></button><button class="b m" aria-label="Булева операция"><svg><use href="#e15"/></svg></button><i class="s"></i><button class="b" aria-label="Копия"><svg><use href="#e16"/></svg></button></div></div>
</main>

<section class="prop"><i class="vgrip"></i><div><div class="pbox"></div><div class="pstrip"></div></div></section>
<footer class="status"><output>Щелкните левой кнопкой мыши на объекте для его выделения (вместе с Ctrl - добавить к выделенным)</output><span></span></footer>
<div class="task"><button class="start"><svg><use href="#win"/></svg>Пуск</button>
<button class="app cur"><svg><use href="#klogo"/></svg>КОМПАС-3D...</button><button class="app"><svg><use href="#qdoc"/></svg>КОМПАС-3D V12</button><button class="app"><svg><use href="#fold"/></svg>D:\Модели для...</button><button class="app"><svg><use href="#word"/></svg>Методичка_КО...</button><button class="app"><svg><use href="#paint"/></svg>Безымянный - ...</button><button class="app"><svg><use href="#skype"/></svg>Skype™ - t9028...</button><button class="app"><svg><use href="#msg"/></svg>Инга</button>
<div class="tray"><b>«</b><svg><use href="#ok"/></svg><svg><use href="#kasp"/></svg><svg><use href="#info"/></svg><span class="lang">Ru</span><svg><use href="#globe"/></svg><time>14:46</time></div></div>
</body>
</html>
```
FILE: styles.css
```css
* { box-sizing: border-box; }
body {
  margin: 0; height: 100vh; overflow: hidden;
  display: flex; flex-direction: column;
  background: linear-gradient(90deg, #c0c0c0, #fff);
  color: #000;
  font: 11px/14px "DejaVu Sans Condensed", "DejaVu Sans", sans-serif;
}
.defs { position: absolute; width: 0; height: 0; }
button { border: 0; padding: 0; margin: 0; background: none; color: inherit; font: inherit; white-space: nowrap; }
h1, h2 { margin: 0; font-size: 11px; font-weight: bold; white-space: nowrap; }
svg { display: block; flex: none; width: 16px; height: 16px; shape-rendering: crispEdges; }
.soft, .task svg, .tab svg { shape-rendering: auto; }

.title { display: flex; align-items: center; height: 18px; flex: none; padding: 0 2px; color: #fff; background: linear-gradient(90deg, #000080, #1084d0); }
.title h1 { flex: 1; margin-left: 2px; font-size: 12px; }
.wb { width: 16px; height: 14px; display: grid; place-items: center; color: #000; background: #c0c0c0; border: 1px solid; border-color: #fff #404040 #404040 #fff; }
.wb svg { width: 10px; height: 10px; }
.wb.last { margin-left: 2px; }

.menu { display: flex; align-items: center; height: 25px; flex: none; gap: 14px; padding-top: 1px; }
.menu .grip { margin-right: -7px; height: 12px; }
.grip { flex: none; width: 3px; height: 16px; margin: 0 4px 0 5px; background: repeating-linear-gradient(#888 0 2px, transparent 2px 4px); }

.row { display: flex; height: 26px; flex: none; }
.bar { display: flex; align-items: center; height: 26px; background: linear-gradient(#fff, #f4f4f4 30%, #b4b4b4); border-bottom: 1px solid #888; border-radius: 4px 6px 6px 4px; }
.bar.grow { flex: 1; }
.bar.grow .grip { margin-left: 4px; }
.b { position: relative; width: 22px; height: 22px; flex: none; display: grid; place-items: center; }
.b.on { background: #ccd0e6; border: 1px solid #000080; }
.flip svg { transform: scaleX(-1); }
.fx { color: #000080; font-weight: bold; }
.s { flex: none; width: 8px; height: 16px; border-left: 3px solid transparent; background: linear-gradient(90deg, #999 1px, #fff 1px 2px, transparent 2px) no-repeat; }
.dr { flex: none; width: 11px; height: 20px; display: grid; place-items: center; }
.dr.wide { width: 14px; }
.dr::before, .combo::after { content: ""; border: 3px solid transparent; border-top-color: #000; border-bottom: 0; }
.dr.off::before, .combo.off::after { border-top-color: #777; }
.ov { align-self: stretch; width: 10px; margin-left: 2px; display: grid; place-items: end center; padding-bottom: 4px; background: linear-gradient(#ccc, #808080); border-radius: 0 5px 5px 0; }
.ov::after { content: ""; width: 7px; height: 6px; background: linear-gradient(#000 1px, transparent 1px 3px, #000 3px); clip-path: polygon(0 0, 100% 0, 100% 50%, 50% 100%, 0 50%); }
.ov.end { margin-left: auto; width: 12px; }
.combo { position: relative; display: flex; height: 20px; flex: none; background: #fff; border: 1px solid #888; }
.combo::after { position: absolute; right: 4px; top: 8px; pointer-events: none; }
.combo select { appearance: none; width: 100%; border: 0; padding: 0 0 0 4px; color: #000; font: inherit; border-radius: 0; background: linear-gradient(90deg, transparent calc(100% - 15px), #888 calc(100% - 15px) calc(100% - 14px), #e8e8e8 calc(100% - 14px)); }
.combo.off { background: #c4c4c4; }
.w60 { width: 60px; } .w66 { width: 66px; } .w84 { width: 86px; }
.co { width: 49px; height: 20px; border: 1px solid #888; background: #c0c0c0; margin-right: 1px; padding: 0; }

.work { position: relative; flex: 1; min-height: 0; display: flex; align-items: flex-start; border-top: 1px solid #888; }
.side { width: 25px; margin-right: 2px; flex: none; display: flex; flex-direction: column; background: linear-gradient(90deg, #fff, #f0f0f0 40%, #aaa); border-radius: 4px 4px 0 0; padding-top: 4px; }
.side button { height: 17px; flex: none; padding-left: 7px; background: repeating-linear-gradient(#888 0 2px, transparent 2px 4px) 4px 3px / 2px 11px no-repeat; }
.side button.act svg { background: #ccd0e6; outline: 1px solid #000080; }
.side button.big { height: 22px; padding: 3px 0 3px 5px; background: none; }
.side hr { width: 16px; height: 1px; flex: none; margin: 3px 0 4px 5px; border: 0; background: #888; }
.side .more { height: 14px; padding: 0 3px; text-align: right; background: linear-gradient(90deg, #888, #ccc); font-size: 10px; }
.hgrip { height: 2px; margin: 0 5px 3px; background: repeating-linear-gradient(90deg, #888 0 2px, transparent 2px 4px); }

.docs { flex: 1; min-width: 0; align-self: stretch; display: flex; flex-direction: column; border-left: 1px solid #888; }
.tabs { display: flex; align-items: center; height: 19px; flex: none; padding-right: 8px; background: linear-gradient(#aaa, #fff); }
.tab { position: relative; height: 19px; padding-top: 1px; }
.tab svg { position: absolute; inset: 0; width: 100%; height: 100%; }
.tab span { position: relative; }
.t1 { width: 158px; margin-left: 2px; padding-left: 16px; }
.t2 { width: 160px; margin-left: -16px; padding-left: 17px; font-weight: bold; }
.t3 { width: 141px; }
.nav { width: 15px; display: grid; place-items: center; }
.nav svg { width: 10px; height: 10px; }
.nav.right { margin: 0 4px 0 auto; }

.frame { flex: 1; min-height: 0; display: flex; padding: 1px 3px 1px 0; border: solid #ffe07c; border-width: 2px 1px 2px 1px; border-bottom-color: #f8e884; background: #c0c0c0; }
.panel { width: 200px; flex: none; display: flex; flex-direction: column; border-right: 1px solid #888; margin-right: 4px; }
.ph { display: flex; align-items: center; height: 18px; flex: none; padding: 0 4px; background: linear-gradient(#fff, #bbb); gap: 6px; }
.ph h2 { flex: 1; font-weight: normal; }
.ph svg { width: 10px; height: 10px; }
.pt { display: flex; align-items: center; height: 25px; flex: none; padding-left: 1px; background: linear-gradient(#fff, #b4b4b4); }
.pb { flex: 1; min-height: 0; display: flex; flex-direction: column; padding: 4px 3px 2px 4px; gap: 1px; border-top: 1px solid #888; }
.box { border: 2px solid #888; }
.treebox { display: flex; flex-direction: column; height: 327px; background: #fff; flex: none; }
.lower { flex: 1; min-height: 0; border-width: 1px; }
.tree, .tree ul { list-style: none; margin: 0; padding: 0; line-height: 20px; white-space: nowrap; }
.tree > li { position: relative; padding-left: 28px; }
.tree > li.root { padding-left: 6px; }
.tree > li > svg { position: absolute; left: 4px; top: 1px; }
.tree > li > .loft { width: 18px; height: 18px; }
.tree ul { margin-left: -15px; position: relative; }
.tree ul::before { content: ""; position: absolute; left: 0; top: 0; bottom: 10px; border-left: 1px dotted #888; }
.tree ul li { position: relative; padding-left: 38px; }
.tree ul li::before { content: ""; position: absolute; left: 0; top: 10px; width: 13px; border-top: 1px dotted #888; }
.tree ul svg { position: absolute; left: 15px; top: 2px; }
.red { color: #f06040; } .green { color: #20a000; } .violet { color: #6030c0; }
.stop { height: 4px; margin: -2px 4px 0; border: 1px solid #000; background: #aaa; border-radius: 2px; }
.scroll { margin-top: auto; display: flex; height: 16px; flex: none; background: repeating-conic-gradient(#c0c0c0 0 25%, #fff 0 50%) 0 0 / 2px 2px; }
.scroll button, .thumb { background: #c0c0c0; border: 1px solid; border-color: #fff #404040 #404040 #fff; }
.scroll button { width: 16px; font-size: 8px; line-height: 12px; }
.thumb { width: 130px; margin: 0 auto 0 16px; }
.pf { display: flex; height: 21px; flex: none; padding-left: 3px; border-top: 1px solid #000; background: linear-gradient(#fff, #aaa); }
.pf button { width: 72px; height: 20px; margin-top: -1px; padding-top: 2px; background: #d0d0d0; border: solid #000; border-width: 0 1px 1px 0; }

.view { position: relative; flex: 1; min-width: 0; overflow: hidden; border: solid #000; border-width: 2px 0 0 2px; background: linear-gradient(#69a5e1, #fff); }
.model { width: 100%; height: 100%; font: 14px "Liberation Serif", serif; }
.vtool { position: absolute; left: 75px; top: 74px; width: 158px; opacity: .72; }
.vtool div { display: flex; align-items: center; height: 23px; padding-left: 1px; background: linear-gradient(#c8dcf0, #98b4d0); }
.vtool .on { background: #a8c8f4; border-color: #0020b0; }

.float { position: absolute; left: 192px; top: 452px; width: 377px; height: 45px; border: 2px solid #6c6c6c; background: #c0c0c0; padding: 1px; }
.fh { display: flex; align-items: center; height: 17px; padding: 0 3px 0 1px; background: #6c6c6c; color: #fff; }
.fh h2 { flex: 1; }
.fh svg { width: 10px; height: 10px; }
.tri { border: 5px solid transparent; border-top-color: #fff; border-bottom: 0; margin-right: 8px; }
.fb { display: flex; align-items: center; height: 22px; padding-left: 1px; background: linear-gradient(#fff, #b8b8b8); }
.b.m::after { content: ""; position: absolute; right: 0; bottom: 2px; width: 4px; height: 4px; background: linear-gradient(135deg, transparent 50%, #000 50%); }

.prop { display: flex; flex: none; height: 70px; padding: 7px 7px 3px 28px; }
.vgrip { width: 3px; height: 56px; margin-right: 1px; background: repeating-linear-gradient(#888 0 2px, #fff 2px 4px); }
.prop > div { flex: 1; }
.pbox { height: 36px; border: 1px solid #888; border-bottom-color: #000; padding: 3px; background: linear-gradient(#fafafa, #d4d4d4) content-box, #c4c4c4; }
.pstrip { height: 23px; background: linear-gradient(#fff, #b0b0b0); }
.status { display: flex; flex: none; height: 18px; padding-left: 4px; gap: 2px; }
.status > * { border: 1px solid #888; }
.status output { flex: 1; line-height: 16px; white-space: nowrap; }
.status span { width: 84px; }

.task { display: flex; align-items: center; flex: none; height: 27px; padding: 0 2px; gap: 3px; background: #c0c0c0; border-top: 1px solid #fff; }
.task button { display: flex; align-items: center; height: 22px; gap: 4px; border: 1px solid; border-color: #fff #202020 #202020 #fff; box-shadow: inset -1px -1px #888; }
.task .start { width: 52px; padding-left: 2px; margin-right: 2px; gap: 2px; font-weight: bold; }
.app { width: 113px; flex: 0 1 113px; padding-left: 4px; overflow: hidden; }
.task .cur { font-weight: bold; border-color: #202020 #fff #fff #202020; box-shadow: inset 1px 1px #888; background: repeating-conic-gradient(#c0c0c0 0 25%, #fff 0 50%) 0 0 / 2px 2px; }
.tray { display: flex; align-items: center; gap: 2px; flex: none; margin-left: auto; width: 148px; height: 23px; padding: 0 6px 0 4px; border: 1px solid; border-color: #888 #fff #fff #888; }
.tray b { font-size: 13px; margin-right: 3px; }
.lang { padding: 1px; background: #808080; color: #fff; }
.tray time { margin-left: auto; }
```
